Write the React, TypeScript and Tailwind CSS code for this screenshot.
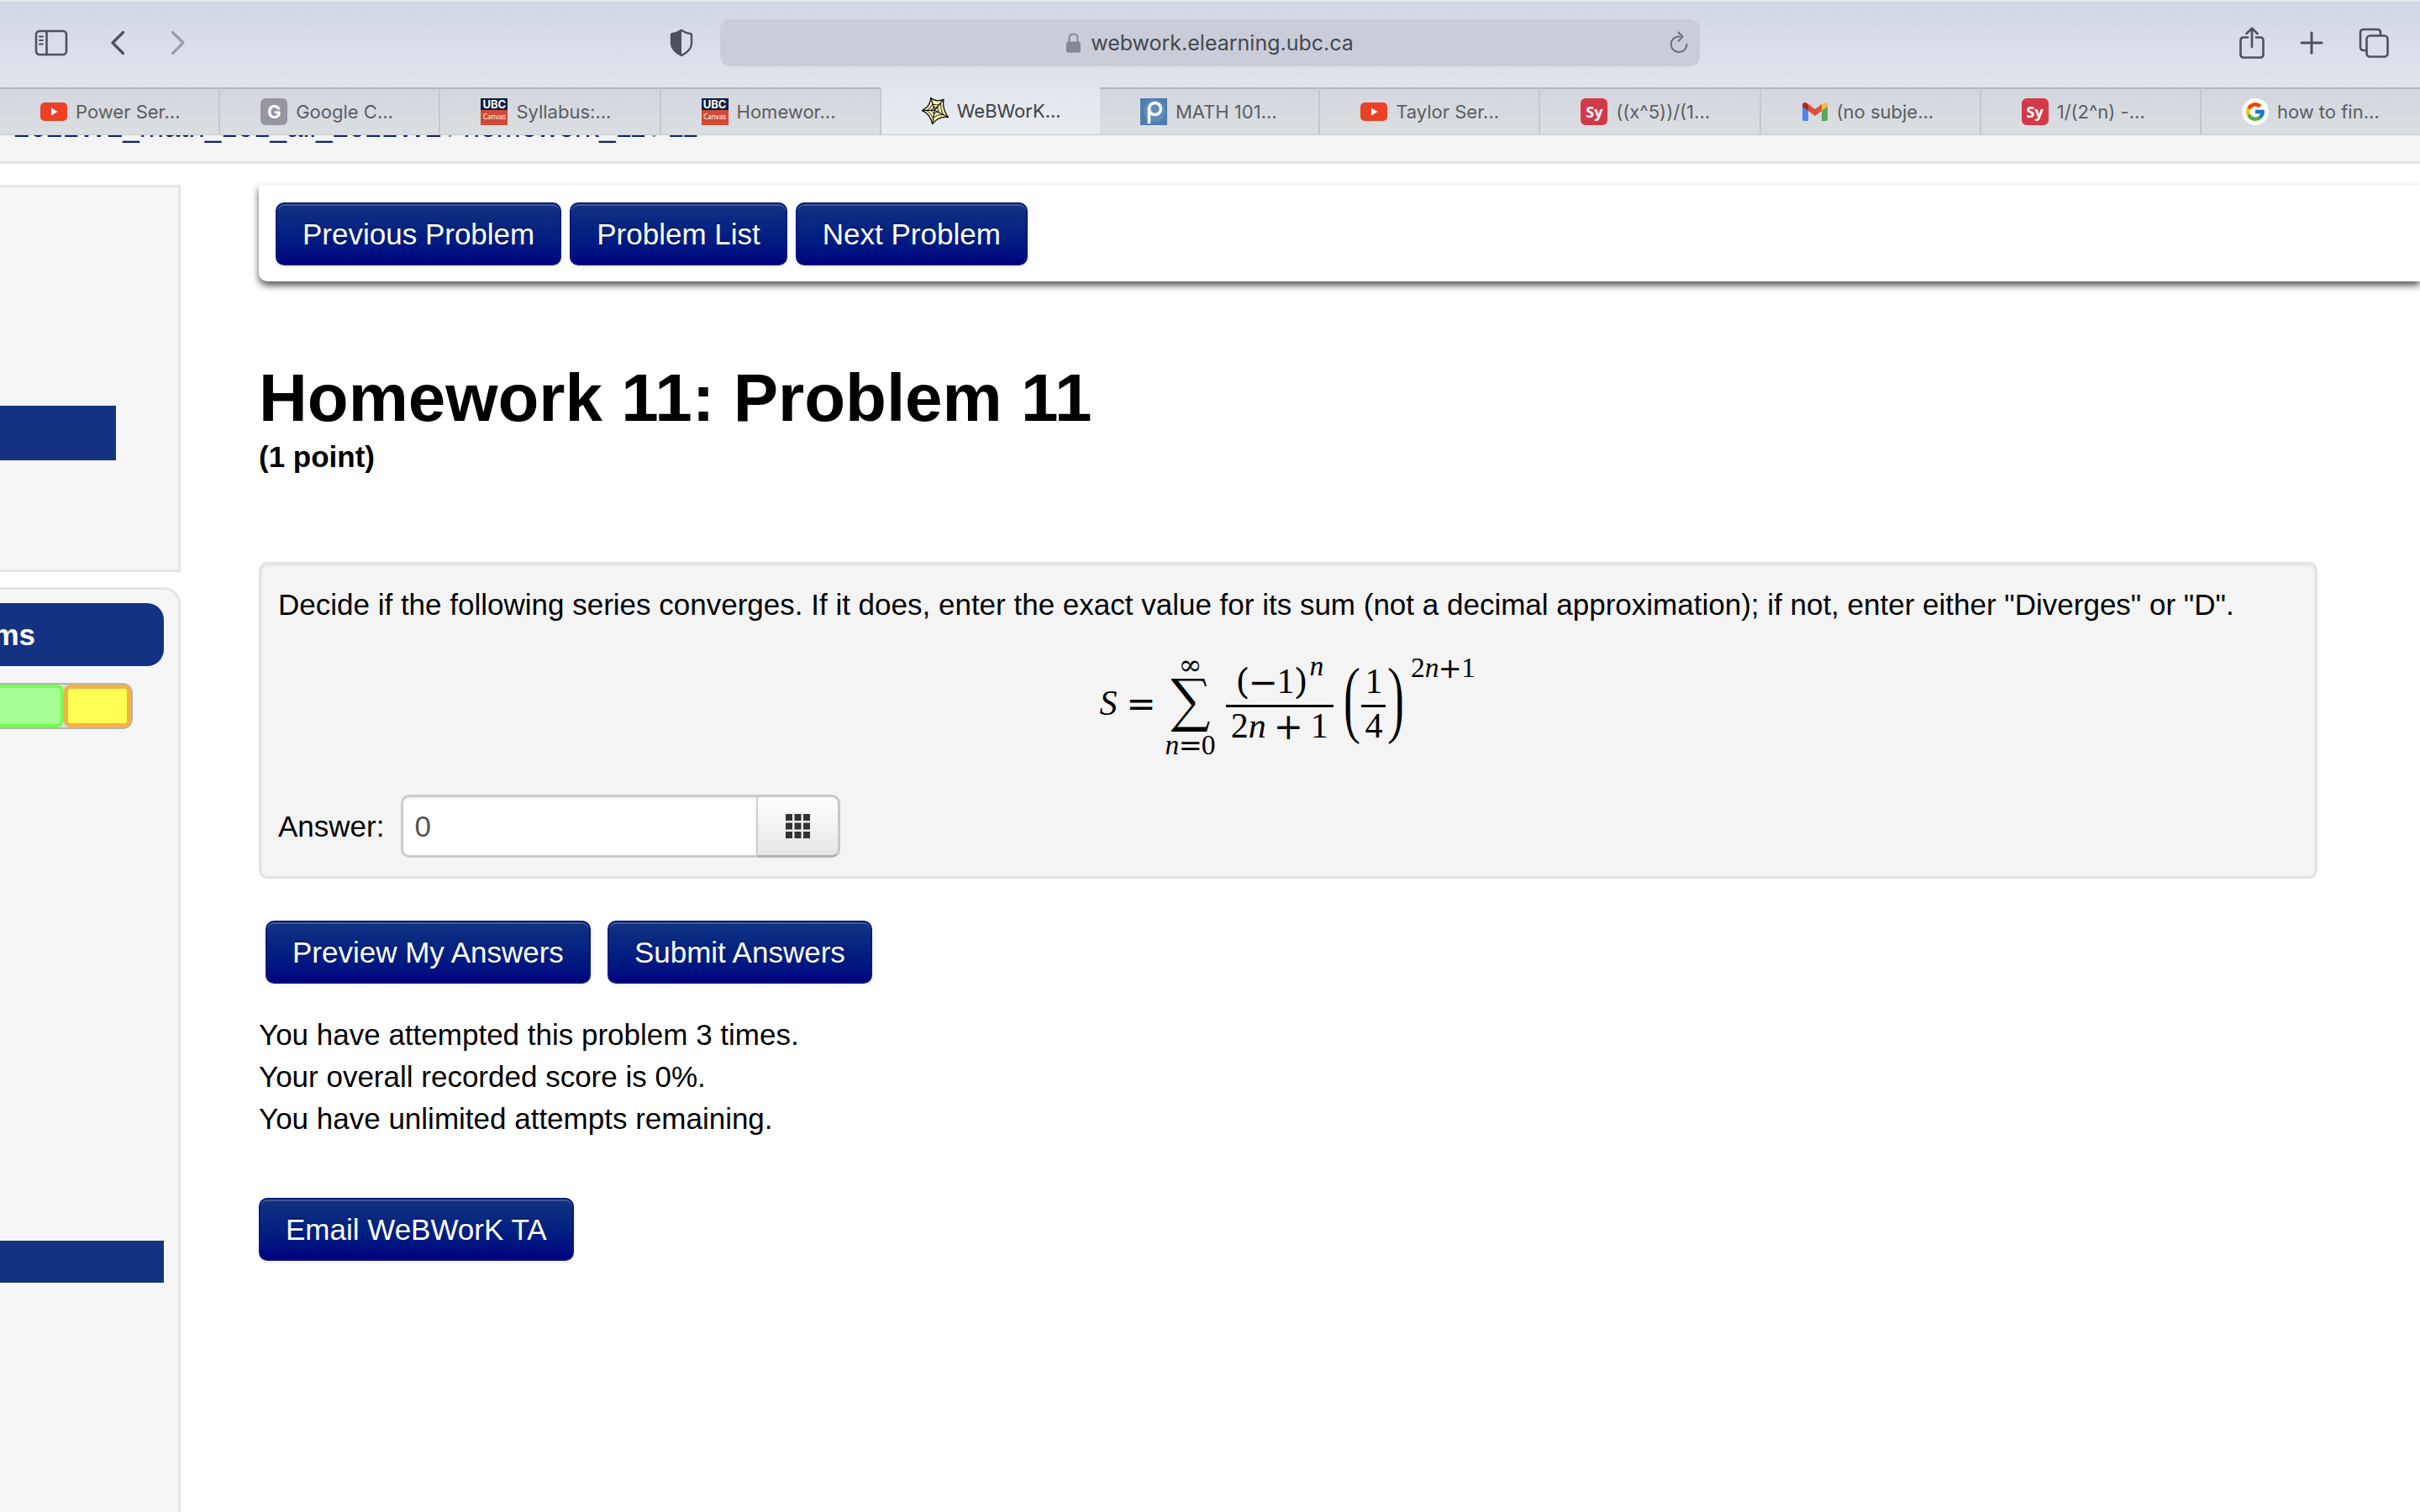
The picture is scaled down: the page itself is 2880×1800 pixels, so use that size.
import { useState } from 'react';
import type { ReactNode } from 'react';
import { FcGoogle } from 'react-icons/fc';

interface Tab {
  title: string;
  icon: ReactNode;
  active?: boolean;
}

function YouTubeIcon() {
  return (
    <svg viewBox="0 0 32 32" className="size-8" aria-hidden="true">
      <rect x="0" y="5" width="32" height="22" rx="5" fill="#eb4126" />
      <path d="M13 11.5 L20.5 16 L13 20.5 Z" fill="#fff" />
    </svg>
  );
}

function CanvasIcon() {
  return (
    <span className="flex flex-col w-8 h-8 text-white text-center bg-[#d24b36]">
      <span className="h-3.5 bg-[#0d1f42] text-[13px] leading-3.5 font-bold">UBC</span>
      <span className="font-['Noto_Sans',sans-serif] text-[8px] leading-4">Canvas</span>
    </span>
  );
}

function WebIcon() {
  return (
    <svg viewBox="0 0 32 32" className="size-8" aria-hidden="true" stroke="#111" fill="none" strokeLinejoin="round">
      <path
        d="M10.7 .5 Q17 6 26 2.3 Q24 14 31.6 23.7 Q20 22 12.6 31.6 Q10.5 20 .4 15.6 Q10 11 10.7 .5 Z"
        fill="#f6f2b4"
        strokeWidth="1.3"
      />
      <path d="M12.5 8 Q17.5 10 22.5 7.5 Q22 14 25.5 20.5 Q18.5 19.5 13.5 24.5 Q11 19 6 15.5 Q11.5 12.5 12.5 8 Z" strokeWidth=".9" />
      <path d="M14 11.5 Q16.5 12.5 19 11 Q18.7 14 20.5 17.5 Q17 17 14.5 19.5 Q13 17 10.5 15.5 Q13 14 14 11.5 Z" strokeWidth=".9" />
      <path d="M15.4 15.2 L10.7 .5 M15.4 15.2 L26 2.3 M15.4 15.2 L31.6 23.7 M15.4 15.2 L12.6 31.6 M15.4 15.2 L.4 15.6" strokeWidth="1.2" />
    </svg>
  );
}

function PaulIcon() {
  return (
    <svg viewBox="0 0 32 32" className="size-8" aria-hidden="true">
      <rect width="32" height="32" fill="#4f7dae" />
      <circle cx="17" cy="15" r="13" fill="#6d9ac4" opacity=".6" />
      <circle cx="17.5" cy="12.5" r="7" fill="none" stroke="#fff" strokeWidth="3.5" />
      <path d="M10.5 12 V30" stroke="#fff" strokeWidth="3.5" />
    </svg>
  );
}

function SymbolabIcon() {
  return (
    <span className="flex size-8 items-center justify-center rounded-md bg-[#d23a4a] font-['Open_Sans',sans-serif] text-lg font-bold text-white">
      Sy
    </span>
  );
}

function GmailIcon() {
  return (
    <svg viewBox="0 0 32 32" className="size-8" aria-hidden="true">
      <path d="M1 9 L8 14 V27 H3 Q1 27 1 25 Z" fill="#4f86ec" />
      <path d="M31 9 L24 14 V27 H29 Q31 27 31 25 Z" fill="#58a65c" />
      <path d="M8 7 L16 13 L24 7 V15 L16 21 L8 15 Z" fill="#d9503f" />
      <path d="M1 8.5 Q1 5 4 5 Q5.5 5 8 7 V15 L1 10 Z" fill="#b3261e" />
      <path d="M31 8.5 Q31 5 28 5 Q26.5 5 24 7 V15 L31 10 Z" fill="#f0bd42" />
    </svg>
  );
}

const tabs: Tab[] = [
  { title: 'Power Ser...', icon: <YouTubeIcon /> },
  {
    title: 'Google C...',
    icon: (
      <span className="flex size-8 items-center justify-center rounded-md bg-[#9695a0] text-[22px] font-bold text-white">
        G
      </span>
    ),
  },
  { title: 'Syllabus:...', icon: <CanvasIcon /> },
  { title: 'Homewor...', icon: <CanvasIcon /> },
  { title: 'WeBWorK...', icon: <WebIcon />, active: true },
  { title: 'MATH 101...', icon: <PaulIcon /> },
  { title: 'Taylor Ser...', icon: <YouTubeIcon /> },
  { title: '((x^5))/(1...', icon: <SymbolabIcon /> },
  { title: '(no subje...', icon: <GmailIcon /> },
  { title: '1/(2^n) -...', icon: <SymbolabIcon /> },
  {
    title: 'how to fin...',
    icon: (
      <span className="flex size-8 items-center justify-center rounded-full bg-white">
        <FcGoogle size={26} />
      </span>
    ),
  },
];

function Toolbar() {
  return (
    <div className="grid h-[104px] grid-cols-[857fr_1166fr_857fr] items-center border-t-2 border-[#e8ebf1] bg-linear-to-b from-[#d1d7e5] to-[#e1e4ec] pb-1 text-[#4d515c]">
      <div className="flex items-center pl-[41px] pr-8">
        <button aria-label="Show sidebar">
          <svg viewBox="0 0 40 32" className="h-8 w-10" fill="none" stroke="currentColor" strokeWidth="2.6" strokeLinecap="round">
            <rect x="2" y="2" width="36" height="28" rx="4" />
            <path d="M14.5 2 V30" />
            <path d="M6 8.5 H10 M6 13 H10 M6 17.5 H10" strokeWidth="2" />
          </svg>
        </button>
        <button aria-label="Back" className="ml-[50px]">
          <svg viewBox="0 0 18 30" className="h-[30px] w-[18px]" fill="none" stroke="currentColor" strokeWidth="3.2" strokeLinecap="round" strokeLinejoin="round">
            <path d="M15.5 2.5 L3 15 L15.5 27.5" />
          </svg>
        </button>
        <button aria-label="Forward" className="ml-[54px] text-[#9a9eaa]">
          <svg viewBox="0 0 18 30" className="h-[30px] w-[18px]" fill="none" stroke="currentColor" strokeWidth="3.2" strokeLinecap="round" strokeLinejoin="round">
            <path d="M2.5 2.5 L15 15 L2.5 27.5" />
          </svg>
        </button>
        <button aria-label="Privacy report" className="ml-auto">
          <svg viewBox="0 0 28 34" className="h-[34px] w-7">
            <path
              d="M14 2 Q19 5.5 25 6.2 Q26 6.4 26 7.5 V18 Q25.5 26.5 14 32 Q2.5 26.5 2 18 V7.5 Q2 6.4 3 6.2 Q9 5.5 14 2 Z"
              fill="none"
              stroke="currentColor"
              strokeWidth="2.4"
            />
            <path d="M14 2 Q9 5.5 3 6.2 Q2 6.4 2 7.5 V18 Q2.5 26.5 14 32 Z" fill="currentColor" />
          </svg>
        </button>
      </div>

      <div className="grid h-14 grid-cols-[36px_1fr_36px] items-center rounded-xl bg-[#c9cdd8]">
        <a
          href="#address"
          className="col-start-2 flex items-center justify-center gap-3 text-[25px] text-[#45484e]"
        >
          <svg viewBox="0 0 17 24" className="h-6 w-[17px] text-[#86888f]">
            <rect x="0" y="10.5" width="17" height="13" rx="2.5" fill="currentColor" />
            <path d="M3.5 11 V6.5 Q3.5 1.5 8.5 1.5 Q13.5 1.5 13.5 6.5 V11" fill="none" stroke="currentColor" strokeWidth="2" />
          </svg>
          webwork.elearning.ubc.ca
        </a>
        <button aria-label="Reload" className="text-[#6b6e77]">
          <svg viewBox="0 0 22 28" className="h-7 w-[22px]" fill="none" stroke="currentColor" strokeWidth="2" strokeLinecap="round" strokeLinejoin="round">
            <path d="M12 6.5 A9.3 9.3 0 1 0 20.3 15.8" />
            <path d="M10.5 1.5 L15.5 6.7 L10.5 11.8" />
          </svg>
        </button>
      </div>

      <div className="flex items-center justify-end gap-[42px] pr-[37px]">
        <button aria-label="Share">
          <svg viewBox="0 0 30 38" className="h-[38px] w-[30px]" fill="none" stroke="currentColor" strokeWidth="2.6" strokeLinecap="round" strokeLinejoin="round">
            <path d="M10 12.5 H5 Q1.5 12.5 1.5 16 V33 Q1.5 36.5 5 36.5 H25 Q28.5 36.5 28.5 33 V16 Q28.5 12.5 25 12.5 H20" />
            <path d="M15 24 V2 M8.5 8 L15 1.8 L21.5 8" />
          </svg>
        </button>
        <button aria-label="New tab">
          <svg viewBox="0 0 28 28" className="size-7" fill="none" stroke="currentColor" strokeWidth="3" strokeLinecap="round">
            <path d="M14 2 V26 M2 14 H26" />
          </svg>
        </button>
        <button aria-label="Show all tabs">
          <svg viewBox="0 0 36 36" className="size-9" fill="none" stroke="currentColor" strokeWidth="2.6" strokeLinejoin="round">
            <rect x="9.5" y="9.5" width="25" height="25" rx="4" />
            <path d="M9.5 27 H6 Q2 27 2 23 V6 Q2 2 6 2 H22 Q26 2 26 6 V9.5" />
          </svg>
        </button>
      </div>
    </div>
  );
}

function TabBar() {
  return (
    <nav aria-label="Tabs" className="flex h-[57px] border-b border-[#c9cbce]">
      {tabs.map((tab, index) => (
        <a
          key={index}
          href="#tab"
          className={`flex min-w-0 flex-1 items-center gap-2.5 overflow-hidden pl-12 text-[22px] whitespace-nowrap ${
            tab.active
              ? 'bg-linear-to-b from-[#e2e5ec] to-[#e9ecef] text-[#3d3f43]'
              : 'border-t-2 border-r-2 border-t-[#b2b6be] border-r-[#c4c7cc] bg-linear-to-b from-[#d3d6dd] to-[#dbdee1] text-[#5b5d62] last:border-r-0'
          }`}
        >
          {tab.icon}
          {tab.title}
        </a>
      ))}
    </nav>
  );
}

// Scrolled almost fully under the tab bar, so only the foot of the text shows
function Breadcrumb() {
  return (
    <nav
      aria-label="Breadcrumb"
      className="flex h-[34px] items-end gap-2 overflow-hidden border-b-3 border-[#e5e5e5] bg-[#f4f4f4] pb-4 pl-4 leading-[50px] whitespace-nowrap text-[#888]"
    >
      <a href="#course" className="text-[#0a1f80]">2021W2_math_101_all_2021W2</a>
      <span>/</span>
      <a href="#set" className="text-[#0a1f80]">homework_11</a>
      <span>/</span>
      <a href="#problem" className="text-[#0a1f80]">11</a>
    </nav>
  );
}

function Sidebar() {
  return (
    <aside className="flex w-[215px] shrink-0 flex-col gap-[18px]">
      <div className="h-[461px] border-y-3 border-r-3 border-[#e5e5e5] bg-[#f6f6f6] pt-[260px]">
        <div className="h-[65px] w-[138px] bg-[#133282]" />
      </div>
      <div className="grow rounded-tr-[20px] border-t-3 border-r-3 border-[#e5e5e5] bg-[#f6f6f6] pt-4 pr-[17px]">
        <h2 className="flex h-[75px] items-center justify-end overflow-hidden rounded-r-[20px] bg-[#133282] pr-[153px] font-bold text-white">
          Problems
        </h2>
        <div className="mt-5 flex h-[55px] w-[158px] rounded-r-xl border-2 border-l-0 border-[#b4b4b4] bg-[#dedede]">
          <div className="w-[76px] rounded-r-lg border-4 border-l-0 border-[#72ff4d] bg-[#a5fe93]" />
          <div className="grow rounded-lg border-5 border-[#f1b144] bg-[#ffff54]" />
        </div>
        <div className="mt-[609px] h-[50px] bg-[#133282]" />
      </div>
    </aside>
  );
}

function ActionButton({ children }: { children: ReactNode }) {
  return (
    <button className="h-[75px] rounded-[10px] border-2 border-[#06197a] bg-linear-to-b from-[#133282] to-[#000080] px-[30px] whitespace-nowrap text-white shadow-[inset_0_2px_0_rgba(255,255,255,0.2),0_2px_4px_rgba(0,0,0,0.08)] text-shadow-[0_-2px_0_rgba(0,0,0,0.25)]">
      {children}
    </button>
  );
}

const letter = "font-['Liberation_Serif',serif] italic normal-case";
const digit = "font-['Liberation_Serif',serif]";

function SeriesFormula() {
  return (
    <div className="flex h-[116px] items-center justify-center">
      <math display="block" className="font-['DejaVu_Math_TeX_Gyre','Liberation_Serif',serif] text-[42px]">
        <mi className={letter}>S</mi>
        <mo lspace="12px" rspace="12px">=</mo>
        <munderover>
          <mo lspace="0" rspace="0">∑</mo>
          <mrow>
            <mi className={letter}>n</mi>
            <mo lspace="0" rspace="0">=</mo>
            <mn className={digit}>0</mn>
          </mrow>
          <mi>∞</mi>
        </munderover>
        <mspace width="12px" />
        <mfrac>
          <mrow>
            <mspace width="10px" />
            <mo stretchy="false">(</mo>
            <mo lspace="0" rspace="0">−</mo>
            <mn className={digit}>1</mn>
            <msup>
              <mo stretchy="false">)</mo>
              <mi className={letter}>n</mi>
            </msup>
            <mspace width="10px" />
          </mrow>
          <mrow>
            <mn className={digit}>2</mn>
            <mi className={letter}>n</mi>
            <mo lspace="10px" rspace="10px">+</mo>
            <mn className={digit}>1</mn>
          </mrow>
        </mfrac>
        <mspace width="8px" />
        <msup>
          <mrow>
            <mo>(</mo>
            <mfrac>
              <mrow>
                <mspace width="4px" />
                <mn className={digit}>1</mn>
                <mspace width="4px" />
              </mrow>
              <mn className={digit}>4</mn>
            </mfrac>
            <mo>)</mo>
          </mrow>
          <mrow>
            <mspace width="4px" />
            <mn className={digit}>2</mn>
            <mi className={letter}>n</mi>
            <mo lspace="0" rspace="0">+</mo>
            <mn className={digit}>1</mn>
          </mrow>
        </msup>
      </math>
    </div>
  );
}

function ProblemBox() {
  const [answer, setAnswer] = useState('0');

  return (
    <section className="mt-[100px] mr-[122px] rounded-[10px] border-3 border-[#e3e3e3] bg-[#f4f4f4] px-5 pt-[23px] pb-[22px] shadow-[inset_0_2px_3px_rgba(0,0,0,0.05)]">
      <p>
        Decide if the following series converges. If it does, enter the exact value for its sum (not a decimal
        approximation); if not, enter either "Diverges" or "D".
      </p>
      <div className="mt-[38px]">
        <SeriesFormula />
      </div>
      <div className="mt-[47px] flex items-center">
        <label htmlFor="answer">Answer:</label>
        <input
          id="answer"
          type="text"
          value={answer}
          onChange={(e) => setAnswer(e.target.value)}
          className="ml-5 h-[75px] w-[425px] rounded-l-[10px] border-3 border-r-2 border-[#ccc] bg-white px-[13px] text-[#555] shadow-[inset_0_2px_3px_rgba(0,0,0,0.08)]"
        />
        <button
          aria-label="Open equation editor"
          className="flex h-[75px] w-[98px] items-center justify-center rounded-r-[10px] border-3 border-l-0 border-[#c8c8c8] border-b-[#b3b3b3] bg-linear-to-b from-white to-[#e6e6e6]"
        >
          <svg viewBox="0 0 29 29" className="size-[29px]" fill="#333">
            {[0, 10.5, 21].map((y) =>
              [0, 10.5, 21].map((x) => <rect key={`${x}-${y}`} x={x} y={y} width="8" height="8" />)
            )}
          </svg>
        </button>
      </div>
    </section>
  );
}

export default function App() {
  return (
    <div className="flex min-h-screen flex-col bg-white font-['Liberation_Sans',Arial,sans-serif] text-[35px] leading-[50px] text-black">
      <header className="font-['Inter',sans-serif] leading-8">
        <Toolbar />
        <TabBar />
      </header>
      <Breadcrumb />

      <div className="flex grow gap-[93px] pt-[25px]">
        <Sidebar />
        <main className="min-w-0 grow">
          <div className="flex h-[115px] gap-2.5 rounded-bl-[10px] bg-white py-[21px] pl-5 shadow-[0_5px_8px_rgba(0,0,0,0.65)]">
            <ActionButton>Previous Problem</ActionButton>
            <ActionButton>Problem List</ActionButton>
            <ActionButton>Next Problem</ActionButton>
          </div>

          <h1 className="mt-[94px] text-[80px] leading-[90px] font-bold">Homework 11: Problem 11</h1>
          <p className="font-bold">(1 point)</p>

          <ProblemBox />

          <div className="mt-[50px] flex gap-5 pl-2">
            <ActionButton>Preview My Answers</ActionButton>
            <ActionButton>Submit Answers</ActionButton>
          </div>

          <div className="mt-9">
            <p>You have attempted this problem 3 times.</p>
            <p>Your overall recorded score is 0%.</p>
            <p>You have unlimited attempts remaining.</p>
          </div>

          <div className="mt-[69px]">
            <ActionButton>Email WeBWorK TA</ActionButton>
          </div>
        </main>
      </div>
    </div>
  );
}
